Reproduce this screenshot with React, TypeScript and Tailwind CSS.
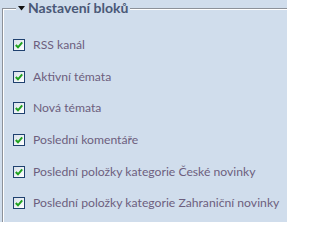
const items = [
  "RSS kanál",
  "Aktivní témata",
  "Nová témata",
  "Poslední komentáře",
  "Poslední položky kategorie České novinky",
  "Poslední položky kategorie Zahraniční novinky",
];

function Check() {
  return (
    <span className="flex h-[12px] w-[12px] shrink-0 items-center justify-center border border-[#1f416f] bg-gradient-to-br from-[#d9e1ea] to-white">
      <svg width="8" height="8" viewBox="0 0 8 8">
        <path d="M0.8 4 L3 6.3 L7.2 1.4" fill="none" stroke="#1fa21f" strokeWidth="2" />
      </svg>
    </span>
  );
}

export default function App() {
  return (
    <div className="h-[222px] w-[287px] overflow-hidden bg-[#d0ddec] pl-[2px] font-['Lato',sans-serif]">
      <fieldset className="mr-[-20px] h-[260px] border-l border-t border-solid border-l-[#8c9199] border-t-[#8c9199] pl-[10px] shadow-[inset_1px_1px_0_#fff]">
        <legend className="ml-[3px] flex h-[16px] items-center gap-[3px] bg-[#d0ddec] px-[2px] text-[14px] font-bold leading-[16px] text-[#4a5877]">
          <svg width="7" height="5" viewBox="0 0 7 5" className="mt-[1px]">
            <path d="M0 0 H7 L3.5 4.5 Z" fill="#111" />
          </svg>
          Nastavení bloků
        </legend>
        <div className="flex flex-col gap-[19.7px] pt-[23px]">
          {items.map((t) => (
            <label key={t} className="flex h-[12px] items-center gap-[8px] text-[12.2px] text-[#6d5f7e]">
              <Check />
              <span className="whitespace-nowrap">{t}</span>
            </label>
          ))}
        </div>
      </fieldset>
    </div>
  );
}
